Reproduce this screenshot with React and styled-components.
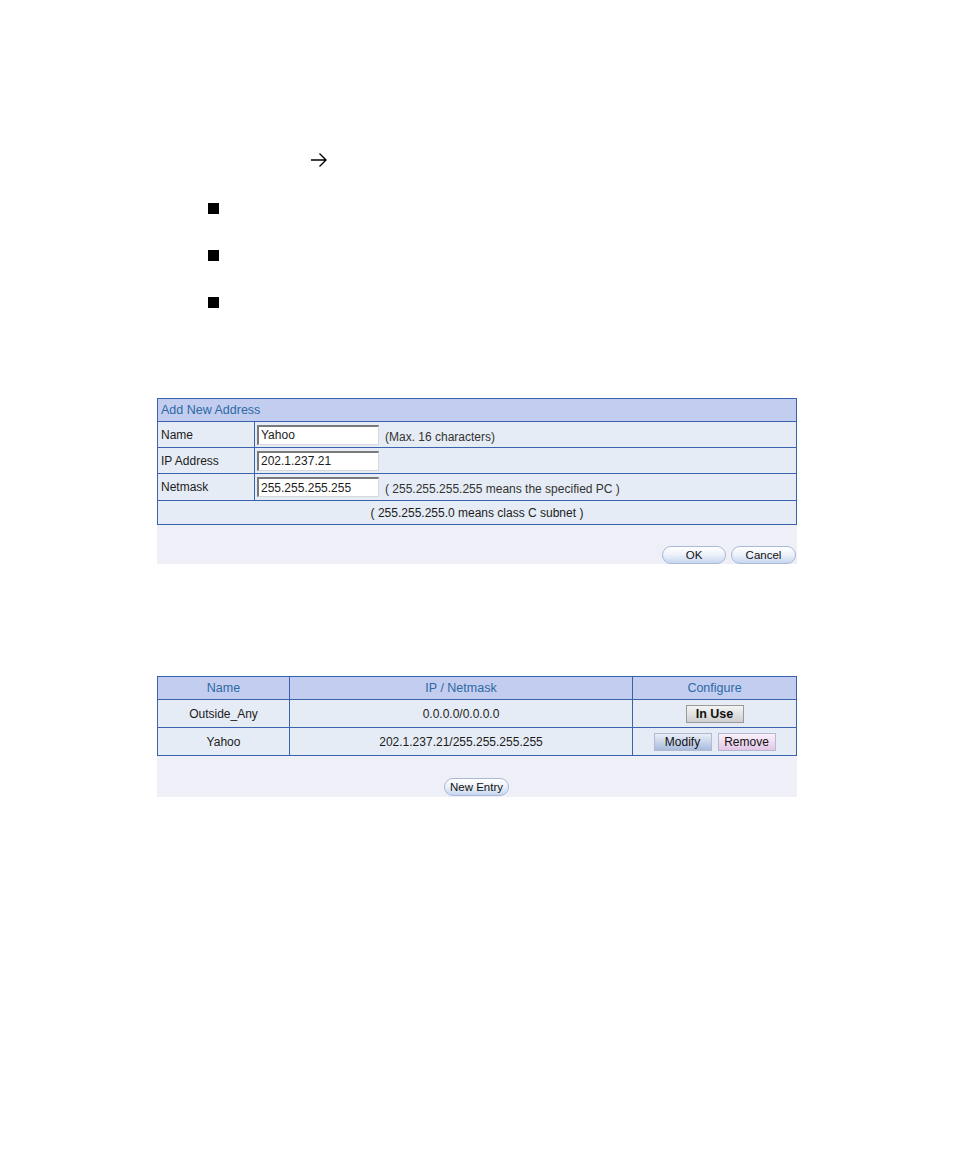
import React from "react";
import styled, { createGlobalStyle } from "styled-components";

const Global = createGlobalStyle`
  body {
    margin: 0;
    background: #ffffff;
    font-family: "Liberation Sans", Arial, sans-serif;
  }
`;

const Page = styled.div`
  width: 954px;
  min-height: 1155px;
  padding-top: 152px;
  box-sizing: border-box;
`;

const ArrowRow = styled.div`
  padding-left: 310px;
  height: 16px;
  display: flex;
`;

const Bullets = styled.ul`
  list-style: none;
  margin: 35px 0 0 0;
  padding: 0 0 0 208px;
  display: flex;
  flex-direction: column;
  gap: 36px;
`;

const Bullet = styled.li`
  width: 11px;
  height: 11px;
  background: #000;
`;

const Panel = styled.div`
  width: 640px;
  margin: ${(p) => p.$top}px 0 0 157px;
  background: #eeeff7;
`;

const Table = styled.table`
  width: 100%;
  border-collapse: collapse;
  font-size: 12px;
  color: #1c1c1c;
  td, th {
    border: 1px solid #3b62ad;
    padding: 0 3px;
  }
`;

const HeadCell = styled.th`
  background: #c3cdef;
  color: #2d6aa5;
  font-weight: normal;
  font-size: 12.5px;
  height: 22px;
  text-align: ${(p) => p.$align || "center"};
`;

const Cell = styled.td`
  background: #e6ecf5;
  height: ${(p) => p.$h || 25}px;
  text-align: ${(p) => p.$align || "left"};
  width: ${(p) => (p.$w ? p.$w + "px" : "auto")};
  && {
    padding-left: ${(p) => (p.$tight ? 2 : 3)}px;
  }
`;

const Field = styled.input`
  width: 122px;
  height: 20px;
  box-sizing: border-box;
  border-top: 2px solid #7a7a7a;
  border-left: 2px solid #7a7a7a;
  border-right: 1px solid #d8d8d8;
  border-bottom: 1px solid #d8d8d8;
  padding: 0 2px;
  font: 12px "Liberation Sans", Arial, sans-serif;
  color: #1c1c1c;
  background: #fff;
  vertical-align: middle;
`;

const Hint = styled.span`
  margin-left: 6px;
  color: #333;
  position: relative;
  top: 3px;
`;

const Footer = styled.div`
  height: ${(p) => p.$h}px;
  box-sizing: border-box;
  display: flex;
  align-items: flex-end;
  justify-content: ${(p) => p.$justify};
  gap: 5px;
  padding: 0 1px ${(p) => p.$pb || 0}px 0;
`;

const Pill = styled.button`
  width: ${(p) => p.$w}px;
  height: 18px;
  border-radius: 9px;
  border: 1px solid #a9b9d6;
  background: linear-gradient(#ffffff 0%, #eef3fb 45%, #c7d7f0 100%);
  font: 11.5px "Liberation Sans", Arial, sans-serif;
  color: #111;
  padding: 0;
`;

const tones = {
  gray: "linear-gradient(#f4f4f4, #cfcfcf)",
  blue: "linear-gradient(#e9eef8, #a9bcdd)",
  pink: "linear-gradient(#fbf1fb, #e3c6e6)",
};

const Square = styled.button`
  width: 58px;
  height: 18px;
  border: 1px solid ${(p) => (p.$tone === "gray" ? "#9a9a9a" : "#b3b9cf")};
  background: ${(p) => tones[p.$tone]};
  font: ${(p) => (p.$bold ? "bold 12.5px" : "12px")} "Liberation Sans", Arial, sans-serif;
  color: #111;
  padding: 0;
  vertical-align: middle;
  & + & {
    margin-left: 6px;
  }
`;

const Arrow = () => (
  <svg width="18" height="16" viewBox="0 0 18 16">
    <path d="M1 8 H16 M9.5 1.5 L16 8 L9.5 14.5" fill="none" stroke="#000" strokeWidth="1.4" />
  </svg>
);

export default function App() {
  return (
    <Page>
      <Global />
      <ArrowRow>
        <Arrow />
      </ArrowRow>
      <Bullets>
        <Bullet />
        <Bullet />
        <Bullet />
      </Bullets>

      <Panel $top={90}>
        <Table>
          <thead>
            <tr>
              <HeadCell colSpan={2} $align="left">Add New Address</HeadCell>
            </tr>
          </thead>
          <tbody>
            <tr>
              <Cell $w={90}>Name</Cell>
              <Cell $tight>
                <Field defaultValue="Yahoo" />
                <Hint>(Max. 16 characters)</Hint>
              </Cell>
            </tr>
            <tr>
              <Cell>IP Address</Cell>
              <Cell $tight>
                <Field defaultValue="202.1.237.21" />
              </Cell>
            </tr>
            <tr>
              <Cell $h={26}>Netmask</Cell>
              <Cell $tight>
                <Field defaultValue="255.255.255.255" />
                <Hint>( 255.255.255.255 means the specified PC )</Hint>
              </Cell>
            </tr>
            <tr>
              <Cell colSpan={2} $h={23} $align="center">( 255.255.255.0 means class C subnet )</Cell>
            </tr>
          </tbody>
        </Table>
        <Footer $h={39} $justify="flex-end">
          <Pill $w={64}>OK</Pill>
          <Pill $w={65}>Cancel</Pill>
        </Footer>
      </Panel>

      <Panel $top={112}>
        <Table>
          <thead>
            <tr>
              <HeadCell style={{ width: 125 }}>Name</HeadCell>
              <HeadCell>IP / Netmask</HeadCell>
              <HeadCell style={{ width: 157 }}>Configure</HeadCell>
            </tr>
          </thead>
          <tbody>
            <tr>
              <Cell $h={27} $align="center">Outside_Any</Cell>
              <Cell $align="center">0.0.0.0/0.0.0.0</Cell>
              <Cell $align="center">
                <Square $tone="gray" $bold>In Use</Square>
              </Cell>
            </tr>
            <tr>
              <Cell $h={27} $align="center">Yahoo</Cell>
              <Cell $align="center">202.1.237.21/255.255.255.255</Cell>
              <Cell $align="center">
                <Square $tone="blue">Modify</Square>
                <Square $tone="pink">Remove</Square>
              </Cell>
            </tr>
          </tbody>
        </Table>
        <Footer $h={41} $justify="center" $pb={1}>
          <Pill $w={65}>New Entry</Pill>
        </Footer>
      </Panel>
    </Page>
  );
}
